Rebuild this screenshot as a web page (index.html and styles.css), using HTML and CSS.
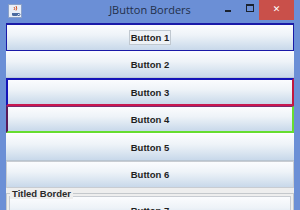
FILE: index.html
```html
<!DOCTYPE html>
<html lang="en">
<head>
    <meta charset="UTF-8">
    <title>JButton Borders</title>
    <link rel="stylesheet" href="styles.css">
</head>
<body>
    <div class="window">
        <div class="titlebar">
            <svg class="app-icon" width="14" height="14" viewBox="0 0 14 14">
                <rect x="0.5" y="0.5" width="13" height="13" fill="#e8eef8" stroke="#8aa0c8"/>
                <path d="M4 9 h6 v1.5 a1.5 1.5 0 0 1 -1.5 1.5 h-3 a1.5 1.5 0 0 1 -1.5 -1.5 z" fill="#4a6aa0"/>
                <path d="M10 9.5 h1 a1 1 0 0 1 0 2 h-1" fill="none" stroke="#4a6aa0"/>
                <path d="M6 3 q1.5 1.5 0 3 M8 2 q1.5 2 0 4.5" fill="none" stroke="#d05020"/>
            </svg>
            <div class="title">JButton Borders</div>
            <div class="controls">
                <span class="ctl-min"></span>
                <span class="ctl-max"></span>
                <span class="ctl-close">&#x2715;</span>
            </div>
        </div>
        <div class="content">
            <div class="btn btn-1"><span class="focus">Button 1</span></div>
            <div class="btn btn-2">Button 2</div>
            <div class="btn btn-3">Button 3</div>
            <div class="btn btn-4">Button 4</div>
            <div class="btn btn-5">Button 5</div>
            <div class="btn btn-6">Button 6</div>
            <div class="titled">
                <div class="titled-label">Titled Border</div>
                <div class="btn btn-7">Button 7</div>
            </div>
        </div>
    </div>
</body>
</html>
```
FILE: styles.css
```css
* {
    margin: 0;
    padding: 0;
    box-sizing: border-box;
}

body {
    width: 300px;
    height: 210px;
    overflow: hidden;
    background-color: #6b8fd6;
}

.window {
    width: 300px;
    height: 210px;
    overflow: hidden;
    display: flex;
    flex-direction: column;
    background-color: #6b8fd6;
}

/* Title bar */
.titlebar {
    height: 23px;
    flex-shrink: 0;
    display: flex;
    align-items: center;
    position: relative;
}

.app-icon {
    margin-left: 8px;
    margin-top: -2px;
}

.title {
    position: absolute;
    left: 0;
    right: 0;
    top: 2px;
    text-align: center;
    font-family: "Open Sans", sans-serif;
    font-size: 11px;
    color: #23304a;
}

.controls {
    margin-left: auto;
    margin-right: 6px;
    align-self: flex-start;
    display: flex;
    align-items: flex-start;
    height: 20px;
}

.ctl-min {
    width: 6px;
    height: 2px;
    background-color: #1a2230;
    margin-top: 10px;
    margin-right: 15px;
}

.ctl-max {
    width: 8px;
    height: 8px;
    border: 1px solid #1a2230;
    border-top-width: 2px;
    margin-top: 4px;
    margin-right: 5px;
}

.ctl-close {
    width: 35px;
    height: 20px;
    background-color: #c9504a;
    color: #fff;
    font-family: "DejaVu Sans", sans-serif;
    font-size: 9px;
    font-weight: bold;
    text-align: center;
    line-height: 19px;
}

/* Content */
.content {
    flex-grow: 1;
    margin: 0 6px;
    background-color: #eeeeee;
    display: flex;
    flex-direction: column;
}

.btn {
    height: 28px;
    flex-shrink: 0;
    display: flex;
    align-items: center;
    justify-content: center;
    font-family: "Liberation Sans", Arial, sans-serif;
    font-size: 9.5px;
    font-weight: bold;
    color: #1e1e1e;
    background: linear-gradient(#fbfcfe 0%, #eef3f8 40%, #dbe6f1 70%, #c8d8ea 100%);
}

.focus {
    border: 1px solid #c0c8d0;
    padding: 1px 1px;
    background-color: #eef2f6;
}

.btn-1 {
    border: 1px solid #1a1aa8;
    border-top-width: 2px;
}

.btn-2 {
    height: 27px;
    border-bottom: 1px solid #b8c8d8;
}

.btn-3 {
    border-top: 2px solid #1414b8;
    border-left: 2px solid #1414b8;
    border-right: 2px solid #c01840;
    border-bottom: 2px solid #c81850;
}

.btn-4 {
    height: 27px;
    border-top: 1px solid #7a2a70;
    border-left: 2px solid #5a1a58;
    border-right: 2px solid #66dd30;
    border-bottom: 2px solid #66dd30;
}

.btn-5 {
    border-top: 1px solid #ffffff;
    border-bottom: 1px solid #b8c4d0;
}

.btn-6 {
    height: 27px;
    border: 1px solid #c8ccd2;
}

/* Titled border */
.titled {
    position: relative;
    margin-top: 5px;
    padding: 2px 2px 0 2px;
    border: 1px solid #c4c8cc;
    border-bottom: none;
    flex-grow: 1;
}

.titled-label {
    position: absolute;
    left: 3px;
    top: -6px;
    padding: 0 2px;
    background-color: #eeeeee;
    font-family: "Liberation Sans", Arial, sans-serif;
    font-size: 9.5px;
    font-weight: bold;
    color: #2a2a2a;
}

.btn-7 {
    border: 1px solid #c8ccd2;
}
```
